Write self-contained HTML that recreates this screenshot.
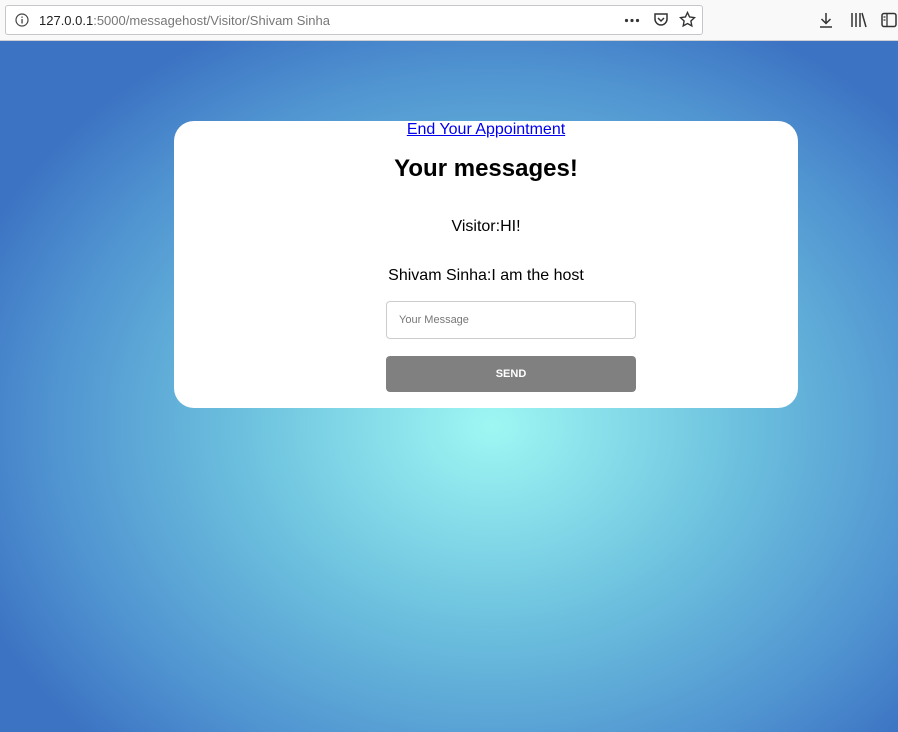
<!DOCTYPE html>
<html><head><style>
body{margin:0;width:898px;height:732px;overflow:hidden;font-family:"Liberation Sans",Arial,sans-serif;}
.bar{position:absolute;left:0;top:0;width:898px;height:40px;background:#f9f9fa;border-bottom:1px solid #d0d0d4;}
.url{position:absolute;left:5px;top:5px;width:698px;height:30px;border:1px solid #c6c6ca;border-radius:3px;background:#fff;box-sizing:border-box;}
.url .t{position:absolute;left:33px;top:7px;font-size:13px;color:#777;}
.url .t b{font-weight:normal;color:#222;}
.bg{position:absolute;left:0;top:41px;width:898px;height:691px;background:radial-gradient(ellipse 560px 450px at 492px 385px,#9ff7f3 0%,#6cc0de 45%,#4f92d0 80%,#3c73c3 100%);}
.card{position:absolute;left:174px;top:121px;width:624px;height:287px;background:#fff;border-radius:20px;}
.c{position:absolute;left:174px;width:624px;text-align:center;}
a{color:#0000ee;}
</style></head><body>
<div class="bar">
<div class="url">
<svg style="position:absolute;left:9px;top:7px" width="14" height="14"><circle cx="7" cy="7" r="6" fill="none" stroke="#444" stroke-width="1.2"/><rect x="6.4" y="6" width="1.3" height="4.5" fill="#444"/><rect x="6.4" y="3.5" width="1.3" height="1.3" fill="#444"/></svg>
<div class="t"><b>127.0.0.1</b>:5000/messagehost/Visitor/Shivam Sinha</div>
<svg style="position:absolute;left:618px;top:12px" width="16" height="5"><circle cx="2.5" cy="2.5" r="1.6" fill="#333"/><circle cx="8" cy="2.5" r="1.6" fill="#333"/><circle cx="13.5" cy="2.5" r="1.6" fill="#333"/></svg>
<svg style="position:absolute;left:647px;top:6px" width="16" height="16"><path d="M2 2h12v5a6 6 0 0 1-12 0z" fill="none" stroke="#333" stroke-width="1.5"/><path d="M5 6l3 3 3-3" fill="none" stroke="#333" stroke-width="1.5"/></svg>
<svg style="position:absolute;left:673px;top:5px" width="17" height="17"><path d="M8.5 1.5l2.1 4.5 4.9.6-3.6 3.4.9 4.9-4.3-2.4-4.3 2.4.9-4.9L1.5 6.6l4.9-.6z" fill="none" stroke="#333" stroke-width="1.4"/></svg>
</div>
<svg style="position:absolute;left:818px;top:12px" width="16" height="17"><path d="M8 1v10M3.5 7l4.5 4.5L12.5 7M2 15h12" fill="none" stroke="#333" stroke-width="1.5"/></svg>
<svg style="position:absolute;left:850px;top:12px" width="18" height="16"><path d="M2 1v14M6 1v14M10 1v14M12 1l4 14" fill="none" stroke="#333" stroke-width="1.5"/></svg>
<svg style="position:absolute;left:881px;top:12px" width="17" height="16"><rect x="1" y="1.5" width="14" height="13" rx="2" fill="none" stroke="#333" stroke-width="1.5"/><path d="M6 2v12M2.5 5h2M2.5 8h2" stroke="#333" stroke-width="1.3"/></svg>
</div>
<div class="bg"></div>
<div class="card"></div>
<div class="c" style="top:121px;font-size:16px;"><a href="#">End Your Appointment</a></div>
<div class="c" style="top:155px;font-size:24px;font-weight:bold;">Your messages!</div>
<div class="c" style="top:218px;font-size:16px;">Visitor:HI!</div>
<div class="c" style="top:267px;font-size:16px;">Shivam Sinha:I am the host</div>
<div style="position:absolute;left:386px;top:301px;width:250px;height:38px;border:1px solid #ccc;border-radius:4px;box-sizing:border-box;background:#fff;">
<span style="position:absolute;left:12px;top:12px;font-size:11px;color:#777;">Your Message</span></div>
<div style="position:absolute;left:386px;top:356px;width:250px;height:36px;background:#808080;border-radius:4px;color:#fff;font-size:11px;font-weight:bold;text-align:center;line-height:36px;">SEND</div>
</body></html>
